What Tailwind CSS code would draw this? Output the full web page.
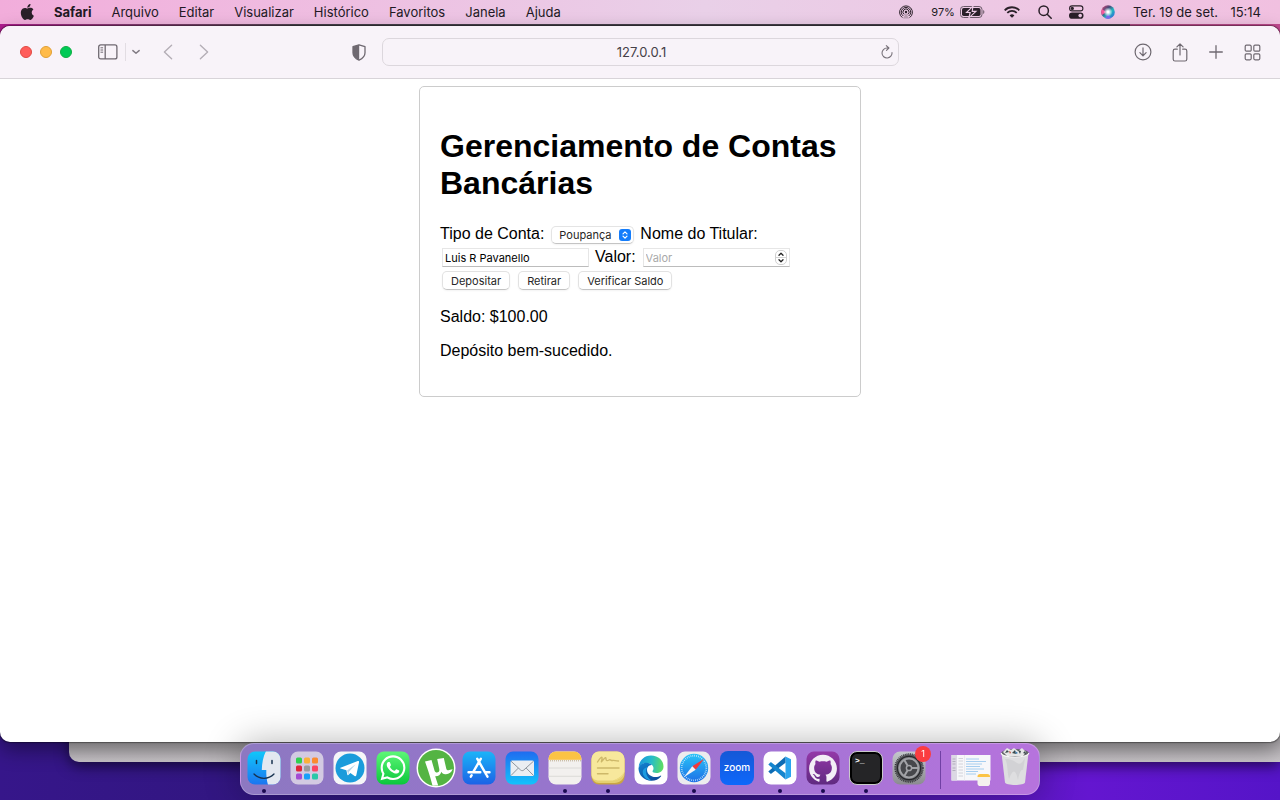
<!DOCTYPE html>
<html lang="pt-BR">
<head>
<meta charset="utf-8">
<meta name="viewport" content="width=device-width, initial-scale=1">
<title>Gerenciamento de Contas Bancárias</title>
<script src="https://cdn.jsdelivr.net/npm/@tailwindcss/browser@4"></script>
</head>
<body class="relative flex min-h-screen flex-col overflow-hidden bg-linear-to-r from-[#36168a] via-[#2a1672] to-[#5c14d8] font-['Inter',sans-serif] text-black">

<!-- Wallpaper strip under the menu bar -->
<div class="absolute inset-x-0 top-0 h-10 bg-linear-to-r from-[#b01c90] from-0% via-[#4b464e] via-25% to-[#c24a90]"></div>
<div class="absolute top-6 right-[150px] left-[290px] h-[6px] bg-[#47424b]"></div>
<!-- Right side wallpaper below the windows -->
<div class="absolute right-0 bottom-0 left-1/2 h-[60px] bg-linear-to-r from-[#2a1672] via-[#6416d0] via-70% to-[#5514c8]"></div>
<!-- Window behind Safari -->
<div class="absolute right-0 bottom-[38px] left-[69px] h-[60px] rounded-bl-[10px] bg-linear-to-b from-[#b4b0b4] from-65% to-[#c8c4c8] shadow-[0_4px_14px_rgba(0,0,0,0.55)]"></div>

<!-- Menu bar -->
<header class="relative flex h-6 items-center justify-between bg-linear-to-r from-[#f2addb] via-[#e9d0e8] via-55% to-[#f1c0e0] pr-[19px] pl-5 text-[13px] leading-6 text-[#221a24]">
  <nav class="flex items-center gap-5" aria-label="Menu">
    <button aria-label="Apple"><svg class="block h-4 w-[14px]" viewBox="1 0 21 24" fill="#2a2029"><path d="M12.152 6.896c-.948 0-2.415-1.078-3.96-1.04-2.04.027-3.91 1.183-4.961 3.014-2.117 3.675-.546 9.103 1.519 12.09 1.013 1.454 2.208 3.09 3.792 3.039 1.52-.065 2.09-.987 3.935-.987 1.831 0 2.35.987 3.96.948 1.637-.026 2.676-1.48 3.676-2.948 1.156-1.688 1.636-3.325 1.662-3.415-.039-.013-3.182-1.221-3.22-4.857-.026-3.04 2.48-4.494 2.597-4.559-1.429-2.09-3.623-2.324-4.39-2.376-2-.156-3.675 1.09-4.61 1.09zM15.53 3.83c.843-1.012 1.4-2.427 1.245-3.83-1.207.052-2.662.805-3.532 1.818-.78.896-1.454 2.338-1.273 3.714 1.338.104 2.715-.688 3.559-1.701"/></svg></button>
    <button class="font-bold">Safari</button>
    <button>Arquivo</button>
    <button>Editar</button>
    <button>Visualizar</button>
    <button>Histórico</button>
    <button>Favoritos</button>
    <button>Janela</button>
    <button>Ajuda</button>
  </nav>
  <div class="flex items-center">
    <button aria-label="AirDrop" class="mr-[18px]"><svg class="block size-[14px]" viewBox="0 0 14 14" fill="none" stroke="#2a2029" stroke-width="1"><path d="M3.4 12.6a6.4 6.4 0 1 1 7.2 0M4.3 11a4.7 4.7 0 1 1 5.4 0M5.2 9.4a3 3 0 1 1 3.6 0"/><circle cx="7" cy="7" r="1.2" fill="#2a2029" stroke="none"/><path d="M7 8l3 5.5H4z" fill="#2a2029" fill-opacity=".25" stroke="none"/></svg></button>
    <span class="mr-[5px] text-[11px]">97%</span>
    <svg class="mr-[19px] block h-3 w-[25px]" viewBox="0 0 25 12" role="img" aria-label="Bateria"><rect x=".5" y=".5" width="21.5" height="11" rx="3" fill="none" stroke="#6b5a69"/><rect x="2" y="2" width="18.5" height="8" rx="1.7" fill="#2a2029"/><path d="M23.2 4v4c1.6-.5 1.6-3.500 0-4z" fill="#6b5a69"/><path d="M13 .2L6.500 6.500h3.700L8.800 11.800 16 5.400h-3.800z" fill="#2a2029" stroke="#eccbe5" stroke-width="1.100"/></svg>
    <button aria-label="Wi-Fi" class="mr-[18px]"><svg class="block h-3 w-4" viewBox="0 0 16 12" fill="none" stroke="#2a2029" stroke-width="1.8"><path d="M.7 4.300a10.300 10.300 0 0 1 14.600 0M3.300 6.900a6.700 6.700 0 0 1 9.400 0"/><path d="M8 11.800L5.600 9.400a3.400 3.400 0 0 1 4.800 0z" fill="#2a2029" stroke="none"/></svg></button>
    <button aria-label="Buscar" class="mr-[17px]"><svg class="block size-[14px]" viewBox="0 0 14 14" fill="none" stroke="#2a2029" stroke-width="1.5" stroke-linecap="round"><circle cx="5.7" cy="5.7" r="4.7"/><path d="M9.200 9.200l4 4"/></svg></button>
    <button aria-label="Central de Controle" class="mr-[17px]"><svg class="block h-[14px] w-[15px]" viewBox="0 0 15 14"><rect x=".6" y=".9" width="13.3" height="5" rx="2.5" fill="none" stroke="#2a2029" stroke-width="1.1"/><circle cx="3.3" cy="3.4" r="1.6" fill="#2a2029"/><rect x="0" y="7.5" width="14.5" height="6.3" rx="3.1" fill="#2a2029"/><circle cx="11.2" cy="10.6" r="1.8" fill="#ecc7e3"/></svg></button>
    <button aria-label="Siri" class="mr-[18px]"><svg class="block size-[14px]" viewBox="0 0 14 14"><defs><linearGradient id="si" x1="0" y1="0" x2="1" y2="1"><stop offset="0" stop-color="#f04878"/><stop offset=".35" stop-color="#4a4a78"/><stop offset=".6" stop-color="#20b8c0"/><stop offset="1" stop-color="#3a58e0"/></linearGradient><radialGradient id="sj"><stop offset=".2" stop-color="#fff"/><stop offset="1" stop-color="#fff" stop-opacity="0"/></radialGradient></defs><circle cx="7" cy="7" r="6.8" fill="url(#si)"/><path d="M1 10a6.800 6.800 0 0 1 0-6l4 3z" fill="#f45a9c"/><path d="M4 13a6.800 6.800 0 0 0 6 0L7 9z" fill="#7a6af0"/><circle cx="7" cy="7" r="4.6" fill="url(#sj)"/></svg></button>
    <time class="flex gap-2 whitespace-nowrap"><span>Ter. 19 de set.</span><span class="w-[35px] text-right">15:14</span></time>
  </div>
</header>

<!-- Safari window -->
<div class="relative mt-[2px] mb-[58px] flex flex-1 flex-col overflow-hidden rounded-[10px] bg-white shadow-[0_0_1px_1px_rgba(0,0,0,0.35),0_8px_20px_rgba(0,0,0,0.4)]">
  <div class="flex h-[53px] shrink-0 items-center border-b border-[#d8d4d9] bg-[#f8f3f9] pr-[19px] pl-5">
    <div class="flex flex-1 items-center">
      <div class="flex gap-2">
        <button aria-label="Fechar" class="size-3 rounded-full border border-[#e14942] bg-[#ff5d5b]"></button>
        <button aria-label="Minimizar" class="size-3 rounded-full border border-[#e0a035] bg-[#ffbb4a]"></button>
        <button aria-label="Maximizar" class="size-3 rounded-full border border-[#0eae43] bg-[#00ca56]"></button>
      </div>
      <button aria-label="Barra lateral" class="ml-[26px]"><svg class="block h-4 w-5" viewBox="0 0 20 16" fill="none" stroke="#6f6971" stroke-width="1.3"><rect x=".7" y=".9" width="18.2" height="14" rx="2"/><path d="M7.200 1v14"/><path d="M2.500 3.800h2.600M2.500 6h2.600M2.500 8.200h2.600" stroke-width="1"/></svg></button>
      <span class="ml-[7px] h-[18px] w-px bg-[#e2dde3]"></span>
      <button aria-label="Grupos de abas" class="ml-[6px]"><svg class="block h-2 w-2" viewBox="0 0 8 8" fill="none" stroke="#827c84" stroke-width="1.5" stroke-linecap="round" stroke-linejoin="round"><path d="M.9 2.600L4 5.200l3.100-2.600"/></svg></button>
      <button aria-label="Voltar" class="ml-[23px]"><svg class="block h-4 w-[10px]" viewBox="0 0 10 16" fill="none" stroke="#b4aeb6" stroke-width="1.4" stroke-linecap="round" stroke-linejoin="round"><path d="M8.600 1.200L1.400 8l7.200 6.800"/></svg></button>
      <button aria-label="Avançar" class="ml-[26px]"><svg class="block h-4 w-[10px]" viewBox="0 0 10 16" fill="none" stroke="#b4aeb6" stroke-width="1.4" stroke-linecap="round" stroke-linejoin="round"><path d="M1.400 1.200L8.600 8l-7.200 6.800"/></svg></button>
      <button aria-label="Relatório de privacidade" class="mr-4 ml-auto"><svg class="block h-[17px] w-[14px]" viewBox="0 0 14 17"><path d="M7 .8l6 1.900v6.100c0 3.600-2.600 5.900-6 7.400-3.400-1.500-6-3.800-6-7.400V2.700z" fill="none" stroke="#6f6971" stroke-width="1.3" stroke-linejoin="round"/><path d="M7.200.8L1 2.700v6.100c0 3.600 2.800 5.900 6.200 7.400z" fill="#6f6971"/></svg></button>
    </div>
    <div class="flex h-7 w-[517px] items-center rounded-[7px] border border-[#dcd7dd] pr-1 pl-5">
      <input aria-label="Endereço" value="127.0.0.1" class="min-w-0 flex-1 bg-transparent text-center text-[13px] leading-5 text-[#454047] outline-none">
      <button aria-label="Recarregar"><svg class="block size-[14px]" viewBox="0 0 14 14" fill="none" stroke="#79737b" stroke-width="1.1" stroke-linecap="round" stroke-linejoin="round"><path d="M12 7.500A5 5 0 1 1 7 3h1.600M6.300.6L8.900 3 6.500 5.400"/></svg></button>
    </div>
    <div class="flex flex-1 items-center justify-end gap-5">
      <button aria-label="Transferências"><svg class="block size-[18px]" viewBox="0 0 18 18" fill="none" stroke="#6f6971" stroke-width="1.2" stroke-linecap="round" stroke-linejoin="round"><circle cx="9" cy="9" r="7.9"/><path d="M9 4.900v7.600M5.900 9.700L9 12.800l3.100-3.100"/></svg></button>
      <button aria-label="Compartilhar"><svg class="block h-[19px] w-4" viewBox="0 0 16 19" fill="none" stroke="#6f6971" stroke-width="1.2" stroke-linecap="round" stroke-linejoin="round"><path d="M5.300 6.200H3A1.800 1.800 0 0 0 1.200 8v8.200A1.800 1.800 0 0 0 3 18h10a1.800 1.800 0 0 0 1.800-1.800V8A1.800 1.800 0 0 0 13 6.200h-2.300M8 12V1M4.900 3.900L8 .9l3.100 3"/></svg></button>
      <button aria-label="Nova aba"><svg class="block size-4" viewBox="0 0 16 16" fill="none" stroke="#6f6971" stroke-width="1.3" stroke-linecap="round"><path d="M8 1.700v12.600M1.700 8h12.600"/></svg></button>
      <button aria-label="Visão geral das abas"><svg class="block size-[17px]" viewBox="0 0 17 17" fill="none" stroke="#6f6971" stroke-width="1.2"><rect x="1.2" y="1.2" width="6" height="6" rx="1.2"/><rect x="9.8" y="1.2" width="6" height="6" rx="1.2"/><rect x="1.2" y="9.8" width="6" height="6" rx="1.2"/><rect x="9.8" y="9.8" width="6" height="6" rx="1.2"/></svg></button>
    </div>
  </div>

  <!-- Page -->
  <main class="flex-1 px-2 pt-[7px] pb-20 font-['Liberation_Sans',Arial,sans-serif] text-[16px] leading-[18px]">
    <section class="mx-auto w-full max-w-[442px] rounded-[5px] border border-[#ccc] p-5">
      <h1 class="my-[21px] text-[32px] leading-[37px] font-bold">Gerenciamento de Contas Bancárias</h1>
      <form class="flex flex-wrap items-center gap-x-1" onsubmit="return false">
        <label for="tipo" class="pb-[2px] leading-[21px]">Tipo de Conta:</label>
        <div class="relative my-[2px] mr-[2px] ml-[3px]">
          <select id="tipo" class="block h-[18px] w-[83px] appearance-none rounded-[5px] border border-[#e4e4e4] border-b-[#c4c4c4] bg-white pl-[7px] font-['Inter',sans-serif] text-[11px] leading-4 text-[#262626] shadow-xs"><option>Poupança</option><option>Corrente</option></select>
          <svg class="pointer-events-none absolute top-[3px] right-[3px] size-3" viewBox="0 0 12 12" fill="none" stroke="#fff" stroke-width="1.2" stroke-linecap="round" stroke-linejoin="round"><rect width="12" height="12" rx="3" fill="#147dfb" stroke="none"/><path d="M4 4.800l2-2 2 2M4 7.200l2 2 2-2"/></svg>
        </div>
        <label for="titular" class="pb-[2px] leading-[21px]">Nome do Titular:</label>
        <input id="titular" value="Luis R Pavanello" class="mx-[2px] h-[19px] w-[147px] border border-[#e6e6e6] border-b-[#bcbcbc] bg-white px-[2px] font-['Inter',sans-serif] text-[11px] outline-none">
        <label for="valor" class="pb-[2px] leading-[21px]">Valor:</label>
        <div class="relative mr-[2px] ml-[3px]">
          <input id="valor" type="number" placeholder="Valor" class="block h-[19px] w-[147px] [appearance:textfield] border border-[#e6e6e6] border-b-[#bcbcbc] bg-white px-[2px] font-['Inter',sans-serif] text-[11px] outline-none placeholder:text-[#a9a9a9]">
          <svg class="pointer-events-none absolute top-[2px] right-[3px] h-[15px] w-3" viewBox="0 0 12 15" fill="none"><rect x=".5" y=".5" width="11" height="14" rx="4.5" fill="#fff" stroke="#cfcfcf"/><path d="M1 7.500h10" stroke="#d4d4d4"/><path d="M4 5.200l2-2 2 2M4 9.800l2 2 2-2" stroke="#222" stroke-width="1.3" stroke-linecap="round" stroke-linejoin="round"/></svg>
        </div>
        <button class="mx-[2px] my-[2px] h-[19px] rounded-[5px] border border-[#e2e2e2] border-b-[#c4c4c4] bg-white px-2 font-['Inter',sans-serif] text-[11px] leading-4 text-[#262626] shadow-xs">Depositar</button>
        <button class="mx-[2px] my-[2px] h-[19px] rounded-[5px] border border-[#e2e2e2] border-b-[#c4c4c4] bg-white px-2 font-['Inter',sans-serif] text-[11px] leading-4 text-[#262626] shadow-xs">Retirar</button>
        <button class="mx-[2px] my-[2px] h-[19px] rounded-[5px] border border-[#e2e2e2] border-b-[#c4c4c4] bg-white px-2 font-['Inter',sans-serif] text-[11px] leading-4 text-[#262626] shadow-xs">Verificar Saldo</button>
      </form>
      <p class="my-4">Saldo: $100.00</p>
      <p class="my-4">Depósito bem-sucedido.</p>
    </section>
  </main>
</div>

<!-- Dock -->
<div class="fixed inset-x-0 bottom-[5px] flex justify-center">
  <div class="flex h-[52px] items-start gap-[9px] rounded-[14px] border border-white/25 bg-linear-to-r from-[#8d78c1] via-[#9a74d0] to-[#b673dd] pt-[7px] pr-[7px] pl-[6px] shadow-[0_0_36px_rgba(0,0,0,0.3)]">
    <button aria-label="Finder" class="flex flex-col items-center gap-1"><svg class="block size-[34px]" viewBox="0 0 34 34"><defs><linearGradient id="fa" x2="0" y2="1"><stop stop-color="#10c8fa"/><stop offset="1" stop-color="#1c74f0"/></linearGradient><clipPath id="fc"><rect x=".5" y=".5" width="33" height="33" rx="7.5"/></clipPath></defs><g clip-path="url(#fc)"><rect width="34" height="34" fill="url(#fa)"/><path d="M19 0c-3 6-4 12-4.200 19h4.500c-.2 5 .3 10 1.700 15h13V0z" fill="#e3e8f0"/></g><path d="M9.500 9.500v3M25 9.500v3" stroke="#17324f" stroke-width="1.5" stroke-linecap="round"/><path d="M7 23c5.500 5.700 14.500 5.700 20 0" fill="none" stroke="#17324f" stroke-width="1.3" stroke-linecap="round"/></svg><span class="size-1 rounded-full bg-[#1a0a50]"></span></button>
    <button aria-label="Launchpad"><svg class="block size-[34px]" viewBox="0 0 34 34"><rect x=".5" y=".5" width="33" height="33" rx="7.5" fill="#d3cae2"/><g stroke="none"><rect x="6" y="6.5" width="6" height="6" rx="1.5" fill="#30d050"/><rect x="14" y="6.5" width="6" height="6" rx="1.5" fill="#fbb13a"/><rect x="22" y="6.5" width="6" height="6" rx="1.5" fill="#fb8a30"/><rect x="6" y="14.5" width="6" height="6" rx="1.5" fill="#e0243a"/><rect x="14" y="14.5" width="6" height="6" rx="1.5" fill="#9a9a9e"/><rect x="22" y="14.5" width="6" height="6" rx="1.5" fill="#fb4464"/><rect x="6" y="22.5" width="6" height="6" rx="1.5" fill="#a44bd4"/><rect x="14" y="22.5" width="6" height="6" rx="1.5" fill="#18a0fa"/><rect x="22" y="22.5" width="6" height="6" rx="1.5" fill="#2ac8a8"/></g></svg></button>
    <button aria-label="Telegram"><svg class="block size-[34px]" viewBox="0 0 34 34"><rect x=".5" y=".5" width="33" height="33" rx="7.5" fill="#f6f6f8"/><circle cx="17" cy="17" r="14.5" fill="#1b9cdb"/><path d="M7.500 16.700L24.800 10c.9-.3 1.500.2 1.200 1.500l-2.700 12.700c-.2 1-.9 1.200-1.700.8l-4.200-3.100-2.100 2c-.5.500-.9.300-1-.3l-.9-4.300-5.900-1.800c-.6-.2-.6-.6 0-.8z" fill="#fff"/><path d="M14 19.500l8.700-6.300-6.900 7.700-.4 3z" fill="#b4d4e8"/></svg></button>
    <button aria-label="WhatsApp"><svg class="block size-[34px]" viewBox="0 0 34 34"><defs><linearGradient id="wa" x2="0" y2="1"><stop stop-color="#5df777"/><stop offset="1" stop-color="#0bc73c"/></linearGradient></defs><rect x=".5" y=".5" width="33" height="33" rx="7.5" fill="url(#wa)"/><path transform="translate(4.500 4.300) scale(1.040)" fill="#fff" d="M17.472 14.382c-.297-.149-1.758-.867-2.030-.967-.273-.099-.471-.148-.67.15-.197.297-.767.966-.94 1.164-.173.199-.347.223-.644.075-.297-.15-1.255-.463-2.390-1.475-.883-.788-1.480-1.761-1.653-2.059-.173-.297-.018-.458.13-.606.134-.133.298-.347.446-.52.149-.174.198-.298.298-.497.099-.198.05-.371-.025-.52-.075-.149-.669-1.612-.916-2.207-.242-.579-.487-.5-.669-.51-.173-.008-.371-.01-.57-.01-.198 0-.52.074-.792.372-.272.297-1.040 1.016-1.040 2.479 0 1.462 1.065 2.875 1.213 3.074.149.198 2.096 3.200 5.077 4.487.709.306 1.262.489 1.694.625.712.227 1.360.195 1.871.118.571-.085 1.758-.719 2.006-1.413.248-.694.248-1.289.173-1.413-.074-.124-.272-.198-.57-.347m-5.421 7.403h-.004a9.870 9.870 0 01-5.031-1.378l-.361-.214-3.741.982.998-3.648-.235-.374a9.860 9.860 0 01-1.510-5.260c.001-5.450 4.436-9.884 9.888-9.884 2.640 0 5.122 1.030 6.988 2.898a9.825 9.825 0 012.893 6.994c-.003 5.450-4.437 9.884-9.885 9.884m8.413-18.297A11.815 11.815 0 0012.050 0C5.495 0 .16 5.335.157 11.892c0 2.096.547 4.142 1.588 5.945L.057 24l6.305-1.654a11.882 11.882 0 005.683 1.448h.005c6.554 0 11.890-5.335 11.893-11.893a11.821 11.821 0 00-3.480-8.413z"/></svg></button>
    <button aria-label="µTorrent"><svg class="block size-[34px] overflow-visible" viewBox="0 0 34 34"><circle cx="17" cy="17" r="19.5" fill="#fff"/><circle cx="17" cy="17" r="18" fill="#54b443"/><path d="M6 10.500l6.500-1.500 3 10.500c1 3.500 5.500 2.300 4.800-1.200L18.200 8l6.600-1 2.500 10.800c.7 2.200 3.200 1.600 6.300.3-1 3.500-3.800 5.500-7.300 5.200-2.200-.2-3.300-1.300-3.900-2.600-1 3.200-3.200 4.700-6.200 4.500l3 9.300-5.700.3c-1.400-6.500-4.500-15.600-7.500-24.300z" fill="#fff"/></svg></button>
    <button aria-label="App Store"><svg class="block size-[34px]" viewBox="0 0 34 34"><defs><linearGradient id="as" x2="0" y2="1"><stop stop-color="#1bb4f8"/><stop offset="1" stop-color="#1b62e6"/></linearGradient></defs><rect x=".5" y=".5" width="33" height="33" rx="7.5" fill="url(#as)"/><path d="M15.200 7.700l8.800 15.500M18.900 7.700L11 21.300M6.500 21.300h11.800M23 21.300h4.500M9.700 24.200l-.9 1.500M24.600 24.200l.9 1.500" fill="none" stroke="#fff" stroke-width="2.4" stroke-linecap="round"/></svg></button>
    <button aria-label="Mail"><svg class="block size-[34px]" viewBox="0 0 34 34"><defs><linearGradient id="ml" x2="0" y2="1"><stop stop-color="#1f6cf0"/><stop offset="1" stop-color="#13c3fb"/></linearGradient></defs><rect x=".5" y=".5" width="33" height="33" rx="7.5" fill="url(#ml)"/><rect x="5.5" y="9.5" width="23.5" height="15.5" rx="1.5" fill="#ebeef2"/><path d="M6 10.200l9.600 8.800c1 .9 2.200.9 3.200 0l9.700-8.800M6 24.500l7.300-7.400M28.500 24.500l-7.300-7.400" fill="none" stroke="#8f969e" stroke-width="1"/></svg></button>
    <button aria-label="Notas" class="flex flex-col items-center gap-1"><svg class="block size-[34px]" viewBox="0 0 34 34"><defs><clipPath id="nc"><rect x=".5" y=".5" width="33" height="33" rx="7.5"/></clipPath></defs><g clip-path="url(#nc)"><rect width="34" height="34" fill="#f2f0ee"/><rect width="34" height="8.8" fill="#fbc344"/><path d="M0 9.800h34" stroke="#b9a98a" stroke-width="1" stroke-dasharray="1 1"/><path d="M0 17h34M0 25.300h34" stroke="#d6d4d2" stroke-width=".8"/></g></svg><span class="size-1 rounded-full bg-[#1a0a50]"></span></button>
    <button aria-label="Notas Adesivas" class="flex flex-col items-center gap-1"><svg class="block size-[34px]" viewBox="0 0 34 34"><rect x=".5" y="3" width="33" height="30.5" rx="7.5" fill="#c9a544"/><path d="M8 .5h18a7.500 7.500 0 0 1 7.500 7.500v15c0 5-5 9-10 9H8a7.500 7.500 0 0 1-7.500-7.500V8A7.500 7.500 0 0 1 8 .5z" fill="#e5d070"/><path d="M8 .5h18a7.500 7.500 0 0 1 7.500 7.500v13c-2 5-7 8.500-12 8.500H8C4 29.500.5 27.500.5 23V8A7.500 7.500 0 0 1 8 .5z" fill="#f7e89c"/><path d="M6.500 11c3-5 5-6 4.500-3s-1.500 4 1 1 3-3 3-1 1.500 2 3 1 2 1 3.500.5 3 .5 6 .5M6.500 17h21.500M6.500 22.800h10.500" fill="none" stroke="#cdb869" stroke-width="1.4" stroke-linecap="round"/><path d="M33.500 20c-3 5.500-7 8.500-12 9.500 5.500-.5 9.500-4 12-9.500z" fill="#e0c962"/></svg><span class="size-1 rounded-full bg-[#1a0a50]"></span></button>
    <button aria-label="Microsoft Edge"><svg class="block size-[34px]" viewBox="0 0 34 34"><defs><linearGradient id="ea" x1="0" y1=".3" x2="1" y2=".4"><stop stop-color="#1a94dc"/><stop offset=".5" stop-color="#25bccb"/><stop offset="1" stop-color="#5fdd62"/></linearGradient><linearGradient id="eb" x2=".6" y2="1"><stop stop-color="#1283d2"/><stop offset="1" stop-color="#0c4e9c"/></linearGradient></defs><rect x=".5" y=".5" width="33" height="33" rx="7.5" fill="#fff"/><path d="M4.600 16C5.500 9 10.500 4.500 17 4.500c7.500 0 12.500 5.200 12.500 11 0 4-3 6.500-7 6.500-2.500 0-4-.8-4-1.700 0-.7 1-1.100 1-3 0-2.800-2.800-5.300-6.500-5.300-4 0-7 1.700-8.400 4z" fill="url(#ea)"/><path d="M4.500 17c.8-3 4-5.300 8-5.300 2.500 0 4.500 1 5.700 2.300-3.200-.5-5.200 1.800-5.200 4.700 0 4.300 4 7.300 8.500 7.300 2 0 3.800-.5 5-1.300.5-.3.900.1.600.6-2.200 3-5.700 4.500-9.600 4.500-7.500 0-13-5.800-13-12.800z" fill="url(#eb)"/><path d="M13.500 16c-2.700 3-2 9.500 4 13.500-5.500-.3-8.800-4.500-8.800-8.500 0-2.500 2-4.500 4.800-5z" fill="#1b9ae0"/></svg></button>
    <button aria-label="Safari" class="flex flex-col items-center gap-1"><svg class="block size-[34px]" viewBox="0 0 34 34"><defs><linearGradient id="sf" x2="0" y2="1"><stop stop-color="#27c4f8"/><stop offset="1" stop-color="#1e6fe6"/></linearGradient></defs><rect x=".5" y=".5" width="33" height="33" rx="7.5" fill="#ececee"/><circle cx="17" cy="17" r="14.2" fill="url(#sf)"/><circle cx="17" cy="17" r="12.3" fill="none" stroke="#cfeafc" stroke-width="1.8" stroke-dasharray=".7 1.230"/><path d="M27.200 7.800L15.300 15.200l3.400 3.500z" fill="#f03a3c"/><path d="M6.800 26.200l8.500-11 3.400 3.500z" fill="#f4f4f6"/></svg><span class="size-1 rounded-full bg-[#1a0a50]"></span></button>
    <button aria-label="Zoom" class="flex h-[34px] w-[34px] items-center justify-center rounded-[8px] bg-linear-to-b from-[#1558d6] to-[#0d68fb] pb-[2px] font-['Inter',sans-serif] text-[10px] leading-3 font-medium text-white">zoom</button>
    <button aria-label="Visual Studio Code" class="flex flex-col items-center gap-1"><svg class="block size-[34px]" viewBox="0 0 34 34"><rect x=".5" y=".5" width="33" height="33" rx="7.5" fill="#fff"/><path d="M22.500 5.500l5.500 2.700v17.600l-5.500 2.700z" fill="#2aa5ee"/><path d="M22.500 5.500L5.300 20.600l2 1.900c.4.300.8.300 1.200 0L22.500 11.700z" fill="#0d6cb4"/><path d="M22.500 28.500L5.300 13.400l2-1.900c.4-.3.800-.3 1.200 0l14 10.800z" fill="#1485ce"/></svg><span class="size-1 rounded-full bg-[#1a0a50]"></span></button>
    <button aria-label="GitHub Desktop" class="flex flex-col items-center gap-1"><svg class="block size-[34px]" viewBox="0 0 34 34"><defs><linearGradient id="gh" x2="0" y2="1"><stop stop-color="#9438a8"/><stop offset="1" stop-color="#602a80"/></linearGradient></defs><rect x=".5" y=".5" width="33" height="33" rx="7.5" fill="url(#gh)"/><path transform="translate(3.100 3.300) scale(1.160)" fill="#f3eef6" d="M12 .297c-6.630 0-12 5.373-12 12 0 5.303 3.438 9.800 8.205 11.385.6.113.82-.258.82-.577 0-.285-.01-1.040-.015-2.040-3.338.724-4.042-1.610-4.042-1.610C4.422 18.070 3.633 17.700 3.633 17.700c-1.087-.744.084-.729.084-.729 1.205.084 1.838 1.236 1.838 1.236 1.070 1.835 2.809 1.305 3.495.998.108-.776.417-1.305.76-1.605-2.665-.3-5.466-1.332-5.466-5.930 0-1.310.465-2.380 1.235-3.220-.135-.303-.54-1.523.105-3.176 0 0 1.005-.322 3.300 1.230.96-.267 1.980-.399 3-.405 1.020.006 2.040.138 3 .405 2.280-1.552 3.285-1.230 3.285-1.230.645 1.653.24 2.873.12 3.176.765.84 1.230 1.910 1.230 3.220 0 4.610-2.805 5.625-5.475 5.920.42.36.81 1.096.81 2.220 0 1.606-.015 2.896-.015 3.286 0 .315.21.69.825.57C20.565 22.092 24 17.592 24 12.297c0-6.627-5.373-12-12-12"/></svg><span class="size-1 rounded-full bg-[#1a0a50]"></span></button>
    <button aria-label="Terminal" class="flex flex-col items-center gap-1"><span class="flex size-[34px] items-start rounded-[8px] border border-[#c9c9cb] bg-[#252527] pt-[4px] pl-[5px] font-['Liberation_Mono',monospace] text-[8px] leading-[9px] font-bold text-white ring-2 ring-black ring-inset">&gt;_</span><span class="size-1 rounded-full bg-[#1a0a50]"></span></button>
    <button aria-label="Preferências do Sistema, 1 aviso" class="relative"><svg class="block size-[34px]" viewBox="0 0 34 34"><defs><linearGradient id="pr" x2="0" y2="1"><stop stop-color="#c4c8cc"/><stop offset="1" stop-color="#8b8b90"/></linearGradient></defs><rect x=".5" y=".5" width="33" height="33" rx="7.5" fill="url(#pr)"/><circle cx="17" cy="17" r="13.6" fill="#55565a"/><circle cx="17" cy="17" r="14" fill="none" stroke="#303134" stroke-width="1.4" stroke-dasharray="1 .8"/><circle cx="17" cy="17" r="11.6" fill="#7c7d81" stroke="#26272a" stroke-width="1.200"/><circle cx="17" cy="17" r="9.400" fill="#46474b" stroke="#a2a3a7" stroke-width="1.800"/><circle cx="17" cy="17" r="2.600" fill="#3a3b3e" stroke="#a2a3a7" stroke-width="1.500"/><path d="M20 17h6.500M15.500 14.400l-3.500-6M15.500 19.600l-3.500 6" stroke="#a2a3a7" stroke-width="2"/></svg><span class="absolute -top-[5px] -right-[5px] flex size-4 items-center justify-center rounded-full bg-[#fb3c40] text-[9px] leading-4 text-white">1</span></button>
    <span class="mx-[5px] h-[38px] w-px bg-[#7140a5]"></span>
    <button aria-label="Janela minimizada" class="-ml-[4px]"><svg class="block h-[36px] w-[40px]" viewBox="0 0 40 36"><rect x=".5" y="4" width="39" height="25.5" fill="#f7f7fa"/><rect x=".5" y="4" width="5.5" height="25.5" fill="#dcd8e4"/><path d="M1.500 8h3M1.500 10.500h3M1.500 13h3M1.500 17h3M1.500 19.500h3" stroke="#a8a4b4" stroke-width=".8"/><path d="M7.500 7.500h4.500M7.500 10h4.500M7.500 13h4.500M7.500 16h4.500M7.500 19h4.500M7.500 22h4.500M7.500 25h4.500" stroke="#c9c9d0" stroke-width=".8"/><path d="M15 8h13M15 10.500h20M15 13h16M15 15.500h14M15 18h18M15 20.500h12M15 23h10" stroke="#9cc8ee" stroke-width=".9"/><path d="M13.500 4v25.500" stroke="#e4e4e8" stroke-width=".7"/><rect x="26.5" y="23" width="12.5" height="12" rx="2.8" fill="#f4f1ee"/><path d="M26.500 26v-.2a2.800 2.800 0 0 1 2.800-2.800h6.900a2.800 2.800 0 0 1 2.800 2.800v.2z" fill="#fbc344"/></svg></button>
    <button aria-label="Lixo" class="-mt-[4px] mr-[2px]"><svg class="block h-[39px] w-[30px]" viewBox="0 0 30 39"><path d="M1.500 6L5 35.500c.5 3.300 19.500 3.300 20 0L28.500 6z" fill="#dedee0"/><path d="M5 12c3 4 2 12 4 20 2-5 4-9 6-7s2 5 3 8c1-6 3-11 5-10l2-12c-3 5-5 7-8 5s-6-4-12-4z" fill="#cacacd" opacity=".6"/><ellipse cx="15" cy="6" rx="13.7" ry="4" fill="#65666a"/><path d="M3 5l4-4 4 2 3-2 4 3 4-3 4 4-3 4H7z" fill="#e6e6e6"/><path d="M5 6l2-3 2 2zM18 3l3 1-1 3zM12 6l3-3 1 4zM23 6l2-2 1 3z" fill="#3a4a4c"/><path d="M9 4l2 1-1 2z" fill="#c94a3a"/><path d="M15 4l3 2-2 1z" fill="#3c7fb4"/><path d="M1.300 6c0 5.300 27.400 5.300 27.400 0" fill="none" stroke="#f6f6f6" stroke-width="1.2"/></svg></button>
  </div>
</div>
</body>
</html>
